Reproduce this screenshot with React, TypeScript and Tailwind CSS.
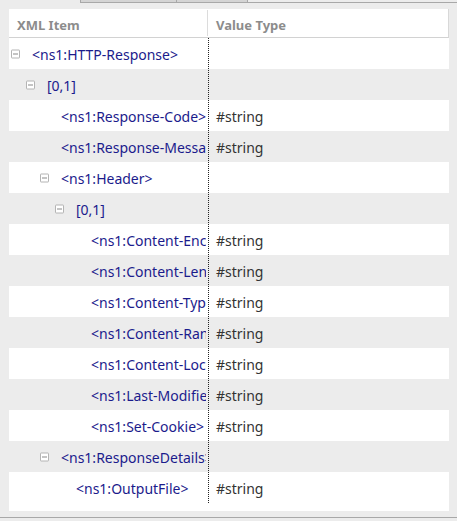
import React from "react";

type Row = { label: string; level: number; expandable?: boolean; type?: string };

const rows: Row[] = [
  { label: "<ns1:HTTP-Response>", level: 0, expandable: true },
  { label: "[0,1]", level: 1, expandable: true },
  { label: "<ns1:Response-Code>", level: 2, type: "#string" },
  { label: "<ns1:Response-Message>", level: 2, type: "#string" },
  { label: "<ns1:Header>", level: 2, expandable: true },
  { label: "[0,1]", level: 3, expandable: true },
  { label: "<ns1:Content-Encoding>", level: 4, type: "#string" },
  { label: "<ns1:Content-Length>", level: 4, type: "#string" },
  { label: "<ns1:Content-Type>", level: 4, type: "#string" },
  { label: "<ns1:Content-Range>", level: 4, type: "#string" },
  { label: "<ns1:Content-Location>", level: 4, type: "#string" },
  { label: "<ns1:Last-Modified>", level: 4, type: "#string" },
  { label: "<ns1:Set-Cookie>", level: 4, type: "#string" },
  { label: "<ns1:ResponseDetails>", level: 2, expandable: true },
  { label: "<ns1:OutputFile>", level: 3, type: "#string" },
];

const indent = ["pl-[23px]", "pl-[38px]", "pl-[52px]", "pl-[67px]", "pl-[82px]"];

function Expander() {
  return (
    <span className="absolute left-[-21px] top-1/2 -translate-y-1/2 w-[9px] h-[9px] border border-[#b4b4b4] rounded-[1px] bg-white flex items-center justify-center">
      <span className="block w-[5px] h-px bg-[#8a8a8a]" />
    </span>
  );
}

export default function App() {
  return (
    <div
      className="w-[457px] h-[521px] bg-[#ececec] relative overflow-hidden"
      style={{ fontFamily: '"Noto Sans", "Open Sans", sans-serif' }}
    >
      {/* tab strip remnants */}
      <div className="h-[9px] flex items-start">
        <div className="w-[80px]" />
        <div className="w-[97px] h-[3px] bg-[#d4d4d4] border-x border-b border-[#a8a8a8]" />
        <div className="w-[71px] h-[3px] bg-[#d4d4d4] border-r border-b border-[#a8a8a8]" />
        <div className="flex-1 mt-[2px] h-px bg-[#a8a8a8]" />
      </div>

      <div className="ml-[9px] w-[440px] h-[502px] bg-white flex flex-col">
        {/* column headers */}
        <div className="h-[29px] flex border-b border-[#d2d2d2] border-r border-r-[#d8d8d8] text-[13px] font-bold text-[#8c8c8c]">
          <div className="w-[199px] flex items-center pt-[5px] pl-[8px] border-r border-[#dcdcdc] my-[1px]">XML Item</div>
          <div className="flex-1 flex items-center pt-[5px] pl-[8px]">Value Type</div>
        </div>

        {/* tree rows */}
        <div className="relative">
          {rows.map((r, i) => (
            <div
              key={i}
              className={`h-[31px] flex text-[14px] ${i % 2 === 1 ? "bg-[#ececec]" : "bg-white"}`}
            >
              <div className="w-[197px] mr-[2px] shrink-0 flex items-center pt-[1px] overflow-hidden">
                <div className={`relative whitespace-nowrap text-[#1b1b8c] ${indent[r.level]}`}>
                  <span className="relative">
                    {r.expandable && <Expander />}
                    {r.label}
                  </span>
                </div>
              </div>
              <div className="flex-1 flex items-center pt-[1px] pl-[8px] text-[#333333]">{r.type}</div>
            </div>
          ))}
          <div className="absolute left-[199px] top-0 bottom-0 border-l border-dotted border-[#222]" />
        </div>
      </div>

      <div className="mt-[6px] h-px bg-[#a8a8a8]" />
    </div>
  );
}
